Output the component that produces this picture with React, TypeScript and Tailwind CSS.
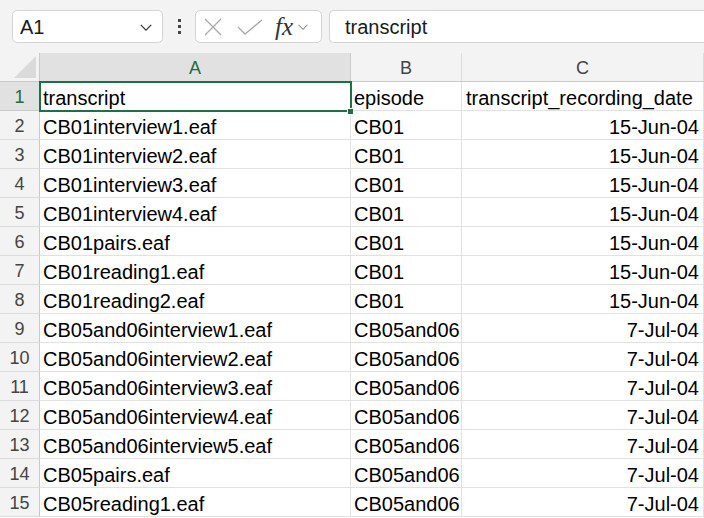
import React from 'react';

const rows: [string, string, string][] = [
  ['transcript', 'episode', 'transcript_recording_date'],
  ['CB01interview1.eaf', 'CB01', '15-Jun-04'],
  ['CB01interview2.eaf', 'CB01', '15-Jun-04'],
  ['CB01interview3.eaf', 'CB01', '15-Jun-04'],
  ['CB01interview4.eaf', 'CB01', '15-Jun-04'],
  ['CB01pairs.eaf', 'CB01', '15-Jun-04'],
  ['CB01reading1.eaf', 'CB01', '15-Jun-04'],
  ['CB01reading2.eaf', 'CB01', '15-Jun-04'],
  ['CB05and06interview1.eaf', 'CB05and06', '7-Jul-04'],
  ['CB05and06interview2.eaf', 'CB05and06', '7-Jul-04'],
  ['CB05and06interview3.eaf', 'CB05and06', '7-Jul-04'],
  ['CB05and06interview4.eaf', 'CB05and06', '7-Jul-04'],
  ['CB05and06interview5.eaf', 'CB05and06', '7-Jul-04'],
  ['CB05pairs.eaf', 'CB05and06', '7-Jul-04'],
  ['CB05reading1.eaf', 'CB05and06', '7-Jul-04'],
];

function Chevron({ className }: { className?: string }) {
  return (
    <svg className={className} viewBox="0 0 16 10" fill="none" stroke="currentColor" strokeWidth={1.4}>
      <path d="M2 2l6 6 6-6" />
    </svg>
  );
}

export default function App() {
  return (
    <div
      className="w-[704px] h-[518px] overflow-hidden bg-white text-black"
      style={{ fontFamily: '"Liberation Sans", Arial, sans-serif' }}
    >
      {/* Formula bar */}
      <div className="h-[53px] bg-[#f3f3f3] flex items-start pt-[10px] pl-[12px]">
        <div className="w-[151px] h-[33px] bg-white border border-[#d4d4d4] rounded-[5px] flex items-center pl-[7px] pr-[9px] pt-[1px]">
          <span className="text-[20px] text-[#1a1a1a] flex-1">A1</span>
          <Chevron className="w-[14px] h-[9px] text-[#333]" />
        </div>
        <div className="w-[32px] h-[33px] flex flex-col items-center justify-center gap-[3px]">
          <span className="w-[3px] h-[3px] bg-[#444]" />
          <span className="w-[3px] h-[3px] bg-[#444]" />
          <span className="w-[3px] h-[3px] bg-[#444]" />
        </div>
        <div className="w-[127px] h-[33px] bg-white border border-[#d4d4d4] rounded-[5px] flex items-center pl-[8px]">
          <svg className="w-[18px] h-[18px] text-[#a8a8a8]" viewBox="0 0 18 18" fill="none" stroke="currentColor" strokeWidth={1.3}>
            <path d="M1 1l16 16M17 1L1 17" />
          </svg>
          <svg className="w-[26px] h-[16px] ml-[15px] text-[#a8a8a8]" viewBox="0 0 26 16" fill="none" stroke="currentColor" strokeWidth={1.3}>
            <path d="M1 8l7 7L25 1" />
          </svg>
          <span
            className="ml-[12px] text-[25px] italic text-[#333] leading-none"
            style={{ fontFamily: '"Liberation Serif", "Times New Roman", serif' }}
          >
            fx
          </span>
          <Chevron className="w-[12px] h-[8px] ml-[4px] text-[#888]" />
        </div>
        <div className="ml-[7px] flex-1 h-[33px] bg-white border border-[#d4d4d4] border-r-0 rounded-l-[5px] flex items-center pl-[15px] pt-[1px]">
          <span className="text-[20px] text-[#1a1a1a]">transcript</span>
        </div>
      </div>

      {/* Grid */}
      <div className="relative">
        <div className="flex h-[29px] bg-[#f3f3f3] border-b border-[#c9c9c9] text-[18px] text-[#444]">
          <div className="w-[40px] border-r border-[#c9c9c9] relative">
            <svg className="absolute right-[3px] bottom-[3px] w-[22px] h-[22px]" viewBox="0 0 22 22">
              <path d="M22 0L22 22L0 22Z" fill="#dadada" />
            </svg>
          </div>
          <div className="w-[311px] border-r border-[#c9c9c9] bg-[#e1e1e1] text-[#1d6b40] flex items-center justify-center pt-[2px]">A</div>
          <div className="w-[111px] border-r border-[#dcdcdc] flex items-center justify-center pt-[2px]">B</div>
          <div className="w-[242px] border-r border-[#dcdcdc] flex items-center justify-center pt-[2px]">C</div>
        </div>

        {rows.map((r, i) => (
          <div key={i} className="flex h-[29px] text-[20px]">
            <div
              className={
                i === 0
                  ? 'w-[40px] border-r border-b border-[#c9c9c9] bg-[#e1e1e1] text-[#1d6b40] flex items-center justify-center text-[18px] pt-[2px]'
                  : 'w-[40px] border-r border-b border-[#c9c9c9] border-b-[#dcdcdc] bg-[#f3f3f3] text-[#444] flex items-center justify-center text-[18px] pt-[2px]'
              }
            >
              {i + 1}
            </div>
            <div className="w-[311px] border-r border-b border-[#e1e1e1] flex items-center pl-[3px] whitespace-nowrap overflow-hidden pt-[3px]">
              {r[0]}
            </div>
            <div className="w-[111px] border-r border-b border-[#e1e1e1] flex items-center pl-[3px] whitespace-nowrap overflow-hidden pt-[3px]">
              {r[1]}
            </div>
            <div
              className={
                i === 0
                  ? 'w-[242px] border-r border-b border-[#e1e1e1] flex items-center pl-[4px] whitespace-nowrap overflow-hidden pt-[3px]'
                  : 'w-[242px] border-r border-b border-[#e1e1e1] flex items-center justify-end pr-[4px] whitespace-nowrap overflow-hidden pt-[3px]'
              }
            >
              {r[2]}
            </div>
          </div>
        ))}

        {/* Selected cell A1 */}
        <div className="absolute left-[39px] top-[28px] w-[313px] h-[31px] border-2 border-[#1e7145] pointer-events-none" />
        <div className="absolute left-[347px] top-[55px] w-[7px] h-[7px] bg-[#1e7145] border border-white" />
      </div>
    </div>
  );
}
